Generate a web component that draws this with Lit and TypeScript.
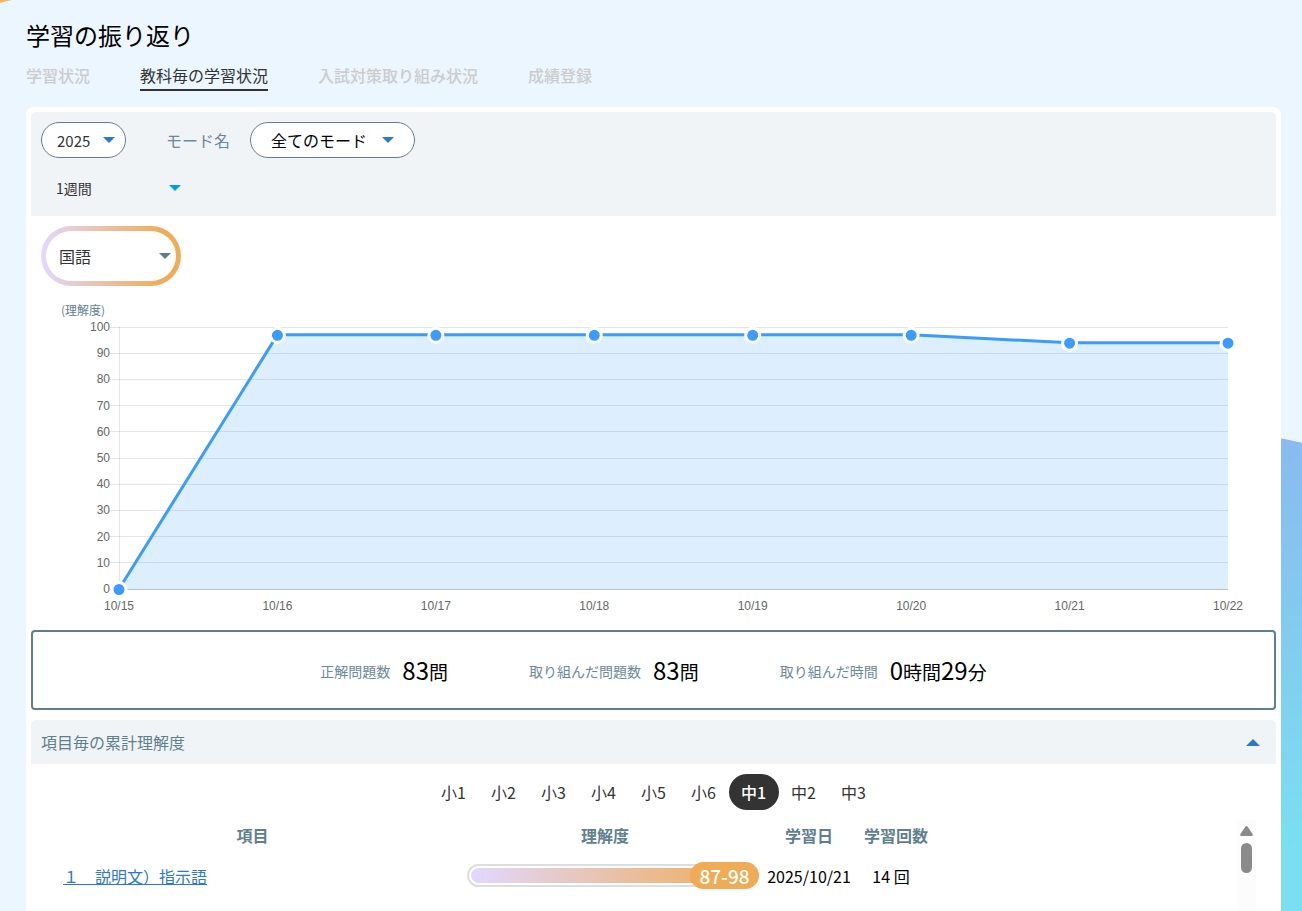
import { LitElement, html, svg, css } from "lit";
import { customElement, property, state } from "lit/decorators.js";
import { classMap } from "lit/directives/class-map.js";

interface Point {
  day: string;
  value: number;
}

const POINTS: Point[] = [
  { day: "10/15", value: 0 },
  { day: "10/16", value: 97 },
  { day: "10/17", value: 97 },
  { day: "10/18", value: 97 },
  { day: "10/19", value: 97 },
  { day: "10/20", value: 97 },
  { day: "10/21", value: 94 },
  { day: "10/22", value: 94 },
];

const TABS = ["学習状況", "教科毎の学習状況", "入試対策取り組み状況", "成績登録"];
const GRADES = ["小1", "小2", "小3", "小4", "小5", "小6", "中1", "中2", "中3"];

/** Area chart of the understanding score by day; redraws to its own width. */
@customElement("score-chart")
export class ScoreChart extends LitElement {
  @property({ attribute: false }) points: Point[] = [];
  @state() private width = 1245;
  private observer?: ResizeObserver;

  static styles = css`
    :host {
      display: block;
      min-width: 0;
    }
    svg {
      display: block;
      width: 100%;
      height: 324px;
    }
    .unit {
      font-size: 12px;
      fill: #5f7f8f;
    }
    .tick {
      font: 12px "Liberation Sans", Arial, sans-serif;
      fill: #666;
    }
    .grid {
      stroke: rgba(0, 0, 0, 0.1);
      shape-rendering: crispEdges;
    }
    .base {
      stroke: rgba(0, 0, 0, 0.25);
      shape-rendering: crispEdges;
    }
    .area {
      fill: rgba(54, 153, 255, 0.17);
    }
    .line {
      fill: none;
      stroke: #3b9bff;
      stroke-width: 3;
      stroke-linejoin: round;
    }
    .dot {
      fill: #3b9bff;
      stroke: #fff;
      stroke-width: 3;
    }
  `;

  connectedCallback() {
    super.connectedCallback();
    this.observer = new ResizeObserver(([entry]) => {
      const next = Math.round(entry.contentRect.width);
      if (next > 0) this.width = next;
    });
    this.observer.observe(this);
  }

  disconnectedCallback() {
    this.observer?.disconnect();
    super.disconnectedCallback();
  }

  render() {
    const left = 88;
    const right = this.width - 48;
    const top = 31;
    const bottom = 293;
    const x = (i: number) => left + ((right - left) * i) / (this.points.length - 1);
    const y = (v: number) => bottom - ((bottom - top) * v) / 100;
    const path = this.points.map((p, i) => `${x(i)},${y(p.value)}`).join(" ");
    const ticks = Array.from({ length: 11 }, (_, i) => i * 10);

    return html`
      <svg role="img" aria-label="理解度の推移">
        <text class="unit" x="30" y="19">(理解度)</text>
        ${ticks.map(
          (t) => svg`
            <line class=${t === 0 ? "base" : "grid"} x1=${left - 9} x2=${right}
              y1=${Math.floor(y(t)) + 0.5} y2=${Math.floor(y(t)) + 0.5}></line>
            <text class="tick" text-anchor="end" x=${left - 9} y=${Math.round(y(t)) + 4}>${t}</text>`
        )}
        <line class="grid" x1=${left + 0.5} x2=${left + 0.5} y1=${top} y2=${bottom}></line>
        <polygon class="area" points="${x(0)},${bottom} ${path} ${right},${bottom}"></polygon>
        <polyline class="line" points=${path}></polyline>
        ${this.points.map(
          (p, i) => svg`
            <circle class="dot" cx=${x(i)} cy=${y(p.value) + 0.5} r="7"></circle>
            <text class="tick" text-anchor="middle" x=${x(i)} y=${bottom + 21}>${p.day}</text>`
        )}
      </svg>
    `;
  }
}

@customElement("app-root")
export class AppRoot extends LitElement {
  @state() private tab = 1;
  @state() private grade = "中1";
  @state() private open = true;

  static styles = css`
    :host {
      display: block;
      position: relative;
      box-sizing: border-box;
      height: 100vh;
      overflow: hidden;
      background: #ebf6ff;
      color: #333;
      font-family: "Noto Sans CJK JP", sans-serif;
      font-size: 16px;
      line-height: 24px;
    }
    *,
    *::before {
      box-sizing: border-box;
    }
    button,
    select {
      margin: 0;
      padding: 0;
      border: 0;
      background: none;
      color: inherit;
      font: inherit;
      cursor: pointer;
    }

    /* background shapes */
    .blob-blue {
      position: absolute;
      top: 432px;
      right: -308px;
      width: 800px;
      height: 800px;
      border-radius: 50%;
      background: linear-gradient(172deg, #8cb4ee 0, #7adff0 480px);
    }
    .blob-orange {
      position: absolute;
      top: 0;
      left: 0;
      width: 14px;
      height: 4px;
      fill: #f8b45c;
    }

    .page {
      position: relative;
      display: flex;
      flex-direction: column;
      height: 100%;
      padding: 17px 21px 0 26px;
    }
    h1 {
      margin: 0 0 10px;
      color: #000;
      font-size: 24px;
      font-weight: 400;
      line-height: 36px;
    }
    .tabs {
      display: flex;
      gap: 50px;
      margin-bottom: 16px;
    }
    .tab {
      padding-bottom: 2px;
      border-bottom: 2px solid transparent;
      color: #ccc;
      font-weight: 500;
    }
    .tab.on {
      border-color: #333;
      color: #333;
      font-weight: 400;
    }

    .card {
      display: flex;
      flex: 1;
      flex-direction: column;
      min-height: 0;
      padding: 5px 5px 0;
      border-radius: 8px 8px 0 0;
      background: #fff;
    }
    .filters {
      display: flex;
      flex-direction: column;
      gap: 12px;
      padding: 10px;
      border-radius: 5px 5px 0 0;
      background: #f0f4f7;
    }
    .row {
      display: flex;
      align-items: center;
    }
    .mode-label {
      margin: 0 20px 0 40px;
      color: #6b8999;
    }

    .pick {
      display: grid;
      align-items: center;
      height: 36px;
    }
    .pick > * {
      grid-area: 1 / 1;
    }
    .pick select {
      width: 100%;
      height: 100%;
      appearance: none;
      outline-offset: -1px;
    }
    .pick svg {
      justify-self: end;
      width: 12px;
      height: 6px;
      margin-right: 10px;
      fill: #2b78d2;
      pointer-events: none;
    }
    .pill select {
      border: 1px solid #5f7f8f;
      border-radius: 18px;
      background: #fff;
    }
    .year {
      width: 85px;
    }
    .year select {
      padding: 2px 0 0 15px;
      font-size: 15px;
    }
    .year svg {
      margin-right: 11px;
    }
    .mode {
      width: 165px;
    }
    .mode select {
      padding-left: 20px;
      color: #000;
    }
    .mode svg {
      margin-right: 21px;
    }
    .period {
      width: 150px;
    }
    .period select {
      padding-left: 15px;
      font-size: 14px;
    }
    .period svg {
      fill: #00a0e9;
    }
    .subject {
      width: 140px;
      height: 60px;
      margin: 10px;
      padding: 5px;
      border-radius: 30px;
      background: linear-gradient(90deg, #e2d8ff, #efad5a 85%);
    }
    .subject select {
      padding-left: 13px;
      border-radius: 25px;
      background: #fff;
    }
    .subject svg {
      margin-right: 5px;
      fill: #5f7f8f;
    }

    .summary {
      display: flex;
      flex-wrap: wrap;
      align-items: center;
      justify-content: center;
      gap: 0 81px;
      min-height: 80px;
      margin: 10px 0;
      padding-top: 2px;
      border: 2px solid #5f7f8f;
      border-radius: 4px;
    }
    .stat {
      display: flex;
      gap: 12px;
      align-items: center;
      line-height: 36px;
    }
    .stat-name {
      color: #6b8999;
      font-size: 14px;
    }
    .stat-value {
      color: #000;
      font-size: 19px;
    }
    .stat-value b {
      font-size: 24px;
      font-weight: 400;
    }

    .section {
      display: flex;
      align-items: center;
      justify-content: space-between;
      height: 44px;
      padding: 0 16px 0 10px;
      border-radius: 5px 5px 0 0;
      background: #f0f4f7;
      color: #5f7f8f;
      text-align: left;
    }
    .section svg {
      width: 14px;
      height: 7px;
      fill: #2b78d2;
    }
    .section.closed svg {
      transform: rotate(180deg);
    }

    .grades {
      display: flex;
      justify-content: center;
      margin: 10px 0;
    }
    .grade {
      width: 50px;
      height: 36px;
      border-radius: 18px;
    }
    .grade.on {
      background: #333;
      color: #fff;
      font-weight: 500;
    }

    .scroll {
      display: flex;
      flex: 1;
      justify-content: space-between;
      min-height: 0;
      padding: 0 20px 0 19px;
      overflow: hidden;
    }
    table {
      width: 879px;
      border-collapse: collapse;
      table-layout: fixed;
      align-self: flex-start;
      color: #000;
    }
    th,
    td {
      height: 30px;
      padding: 0;
      text-align: center;
      white-space: nowrap;
    }
    th {
      color: #5f7f8f;
      font-weight: 700;
    }
    td {
      height: 52px;
    }
    .c-item {
      width: 405px;
    }
    .c-bar {
      width: 300px;
    }
    .c-date {
      width: 108px;
    }
    .c-count {
      width: 66px;
    }
    td.item {
      padding-left: 13px;
      text-align: left;
    }
    a {
      color: #2b78d2;
    }
    td.meter {
      padding: 0 0 2px 12px;
    }
    td.count {
      padding-right: 10px;
    }
    .track {
      position: relative;
      height: 23px;
      padding: 2px;
      border: 2px solid #ddd;
      border-radius: 12px;
    }
    .fill {
      height: 100%;
      border-radius: 8px;
      background: linear-gradient(90deg, #e2d8ff, #efab55);
    }
    .badge {
      position: absolute;
      top: -4px;
      right: -6px;
      width: 69px;
      height: 27px;
      border-radius: 14px;
      background: #efab55;
      color: #fff;
      font-size: 19px;
      font-weight: 500;
      line-height: 27px;
    }
    .bar {
      display: flex;
      flex-direction: column;
      align-items: center;
      gap: 7px;
      width: 19px;
      padding-top: 6px;
      background: #fcfcfc;
    }
    .bar svg {
      width: 13px;
      height: 10px;
      fill: #8b8b8b;
    }
    .thumb {
      width: 11px;
      height: 30px;
      border-radius: 6px;
      background: #8b8b8b;
    }
  `;

  private arrow() {
    return html`<svg viewBox="0 0 12 6" aria-hidden="true"><path d="M0 0h12L6 6z"></path></svg>`;
  }

  private stat(name: string, parts: [string, string][]) {
    return html`
      <div class="stat">
        <span class="stat-name">${name}</span>
        <span class="stat-value">${parts.map(([n, unit]) => html`<b>${n}</b>${unit}`)}</span>
      </div>
    `;
  }

  render() {
    return html`
      <div class="blob-blue"></div>
      <svg class="blob-orange" viewBox="0 0 14 4" aria-hidden="true">
        <path d="M0 0H12Q6 .8 0 3z"></path>
      </svg>
      <main class="page">
        <h1>学習の振り返り</h1>
        <nav class="tabs">
          ${TABS.map(
            (name, i) => html`<button
              class=${classMap({ tab: true, on: i === this.tab })}
              @click=${() => (this.tab = i)}
            >${name}</button>`
          )}
        </nav>
        <div class="card">
          <div class="filters">
            <div class="row">
              <div class="pick pill year">
                <select aria-label="年度"><option>2025</option></select>${this.arrow()}
              </div>
              <label class="mode-label" for="mode">モード名</label>
              <div class="pick pill mode">
                <select id="mode"><option>全てのモード</option></select>${this.arrow()}
              </div>
            </div>
            <div class="pick period">
              <select aria-label="期間"><option>1週間</option></select>${this.arrow()}
            </div>
          </div>
          <div class="pick subject">
            <select aria-label="教科"><option>国語</option></select>${this.arrow()}
          </div>
          <score-chart .points=${POINTS}></score-chart>
          <div class="summary">
            ${this.stat("正解問題数", [["83", "問"]])}
            ${this.stat("取り組んだ問題数", [["83", "問"]])}
            ${this.stat("取り組んだ時間", [["0", "時間"], ["29", "分"]])}
          </div>
          <button
            class=${classMap({ section: true, closed: !this.open })}
            aria-expanded=${this.open}
            @click=${() => (this.open = !this.open)}
          >
            <span>項目毎の累計理解度</span>
            <svg viewBox="0 0 14 7" aria-hidden="true"><path d="M0 7h14L7 0z"></path></svg>
          </button>
          ${this.open ? this.details() : ""}
        </div>
      </main>
    `;
  }

  private details() {
    return html`
      <div class="grades">
        ${GRADES.map(
          (g) => html`<button
            class=${classMap({ grade: true, on: g === this.grade })}
            @click=${() => (this.grade = g)}
          >${g}</button>`
        )}
      </div>
      <div class="scroll">
        <table>
          <thead>
            <tr>
              <th class="c-item">項目</th>
              <th class="c-bar">理解度</th>
              <th class="c-date">学習日</th>
              <th class="c-count">学習回数</th>
            </tr>
          </thead>
          <tbody>
            <tr>
              <td class="item"><a href="#item-1">１　説明文）指示語</a></td>
              <td class="meter">
                <div class="track">
                  <div class="fill"></div>
                  <div class="badge">87-98</div>
                </div>
              </td>
              <td>2025/10/21</td>
              <td class="count">14 回</td>
            </tr>
          </tbody>
        </table>
        <div class="bar" aria-hidden="true">
          <svg viewBox="0 0 13 10"><path d="M6.500 0Q7.200 0 7.700 .8L12.600 8Q13.200 10 11.500 10H1.500Q-.2 10 .4 8L5.300 .8Q5.800 0 6.500 0z"></path></svg>
          <div class="thumb"></div>
        </div>
      </div>
    `;
  }
}
